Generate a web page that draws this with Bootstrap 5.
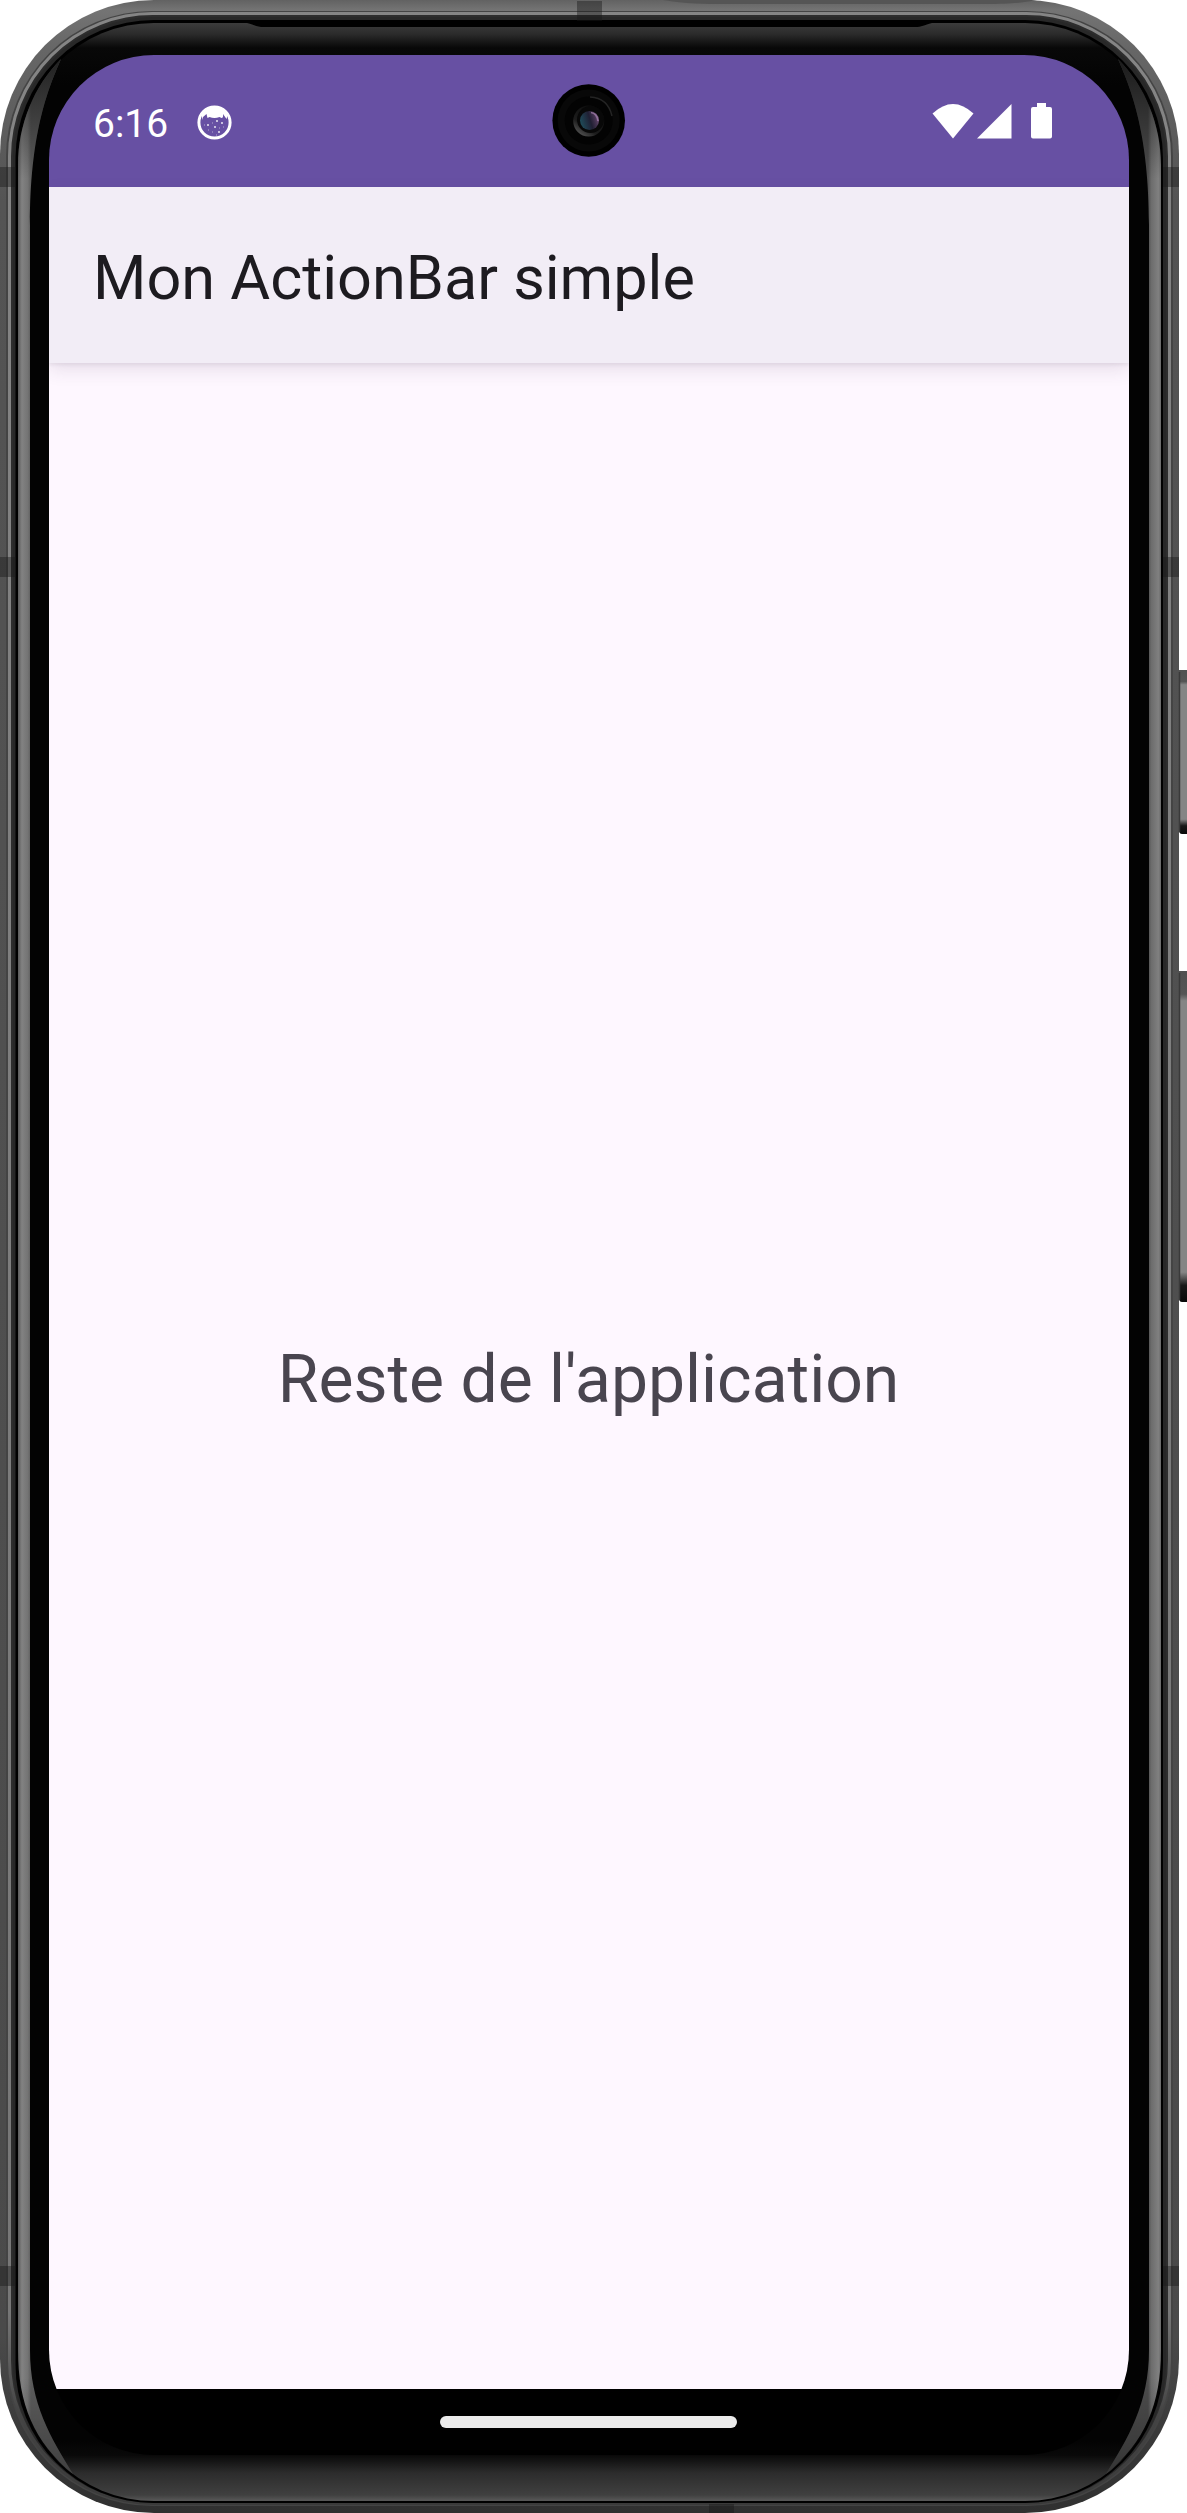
<!DOCTYPE html>
<html lang="fr">
<head>
<meta charset="utf-8">
<meta name="viewport" content="width=device-width, initial-scale=1">
<title>Mon ActionBar simple</title>
<link href="https://cdn.jsdelivr.net/npm/bootstrap@5.3.0/dist/css/bootstrap.min.css" rel="stylesheet">
<style>
body{font-family:Roboto,"Noto Sans",sans-serif;overflow:hidden}
.phone{width:1187px;height:2513px;padding:55px 58px 58px 49px}
.screen{border-radius:105px;z-index:1}
.status-bar{height:132px;background:#6750a3;color:#fff;padding:0 72px 0 44px}
.clock{font-size:39px;line-height:1;width:102px;padding-top:6px}
.notification{margin-top:2px}
.status-icons{margin-top:-1px}
.app-bar{height:176px;background:#f2edf6;padding:8px 44px 0 44px;box-shadow:0 2px 3px rgba(70,50,80,.08),0 7px 17px rgba(70,50,80,.12);z-index:1}
.app-title{font-size:61.200px;line-height:1;color:#1d1b20}
.app-body{background:#fef7ff;padding:7px 1px 0 0}
.app-text{font-size:66px;line-height:1;color:#49454f}
.nav-area{height:66px;background:#000;padding:27px 1px 0 0}
.home-pill{width:297px;height:12px;background:#ebebeb}
.camera{left:503px;top:29px}
</style>
<script src="https://cdn.jsdelivr.net/npm/bootstrap@5.3.0/dist/js/bootstrap.bundle.min.js"></script>
</head>
<body class="m-0 bg-white">
<div class="phone position-relative d-flex flex-column">
  <svg class="position-absolute top-0 start-0" width="1187" height="2513" viewBox="0 0 1187 2513" aria-hidden="true">
    <defs>
      <linearGradient id="metal" gradientUnits="userSpaceOnUse" x1="0" y1="0" x2="0" y2="2513">
        <stop offset="0" stop-color="#626262"/><stop offset=".004" stop-color="#747474"/><stop offset=".02" stop-color="#666"/><stop offset=".08" stop-color="#545454"/><stop offset=".93" stop-color="#4a4a4a"/><stop offset=".965" stop-color="#3b3b3b"/><stop offset="1" stop-color="#303030"/>
      </linearGradient>
      <linearGradient id="shine" gradientUnits="userSpaceOnUse" x1="0" y1="0" x2="0" y2="2513">
        <stop offset="0" stop-color="#858585"/><stop offset=".92" stop-color="#777"/><stop offset=".96" stop-color="#444"/><stop offset="1" stop-color="#393939"/>
      </linearGradient>
      <linearGradient id="glass" gradientUnits="userSpaceOnUse" x1="0" y1="23" x2="0" y2="2500">
        <stop offset="0" stop-color="#3c3c3c"/><stop offset=".0045" stop-color="#2b2b2b"/><stop offset=".01" stop-color="#080808"/><stop offset=".025" stop-color="#030303"/><stop offset=".976" stop-color="#030303"/><stop offset=".982" stop-color="#090909"/><stop offset=".989" stop-color="#2c2c2c"/><stop offset=".998" stop-color="#404040"/><stop offset="1" stop-color="#555"/>
      </linearGradient>
      <linearGradient id="glowLeft" gradientUnits="userSpaceOnUse" x1="18" x2="31" y1="0" y2="0">
        <stop offset="0" stop-color="#5a5a5a"/><stop offset=".3" stop-color="#828282"/><stop offset=".75" stop-color="#747474"/><stop offset="1" stop-color="#5c5c5c"/>
      </linearGradient>
      <linearGradient id="glowRight" gradientUnits="userSpaceOnUse" x1="1148" x2="1161" y1="0" y2="0">
        <stop offset="0" stop-color="#4c4c4c"/><stop offset=".25" stop-color="#6c6c6c"/><stop offset=".8" stop-color="#808080"/><stop offset="1" stop-color="#6a6a6a"/>
      </linearGradient>
      <linearGradient id="tips" gradientUnits="userSpaceOnUse" x1="0" y1="58" x2="0" y2="2474">
        <stop offset="0" stop-color="#000" stop-opacity=".65"/><stop offset=".05" stop-color="#000" stop-opacity="0"/><stop offset=".96" stop-color="#000" stop-opacity="0"/><stop offset="1" stop-color="#000" stop-opacity=".3"/>
      </linearGradient>
      <linearGradient id="key" x1="0" x2="0" y1="0" y2="1">
        <stop offset="0" stop-color="#505050"/><stop offset=".07" stop-color="#555"/><stop offset=".09" stop-color="#858585"/><stop offset=".91" stop-color="#858585"/><stop offset=".95" stop-color="#181818"/><stop offset="1" stop-color="#080808"/>
      </linearGradient>
    </defs>
    <!-- metal rim -->
    <rect x="0" y="0" width="1179" height="2513" rx="154" fill="url(#metal)"/>
    <path d="M663 0C685 4 705 4 725 4H985C1010 4 1020 3 1037 0Z" fill="#555"/>
    <rect x="6" y="11" width="1167" height="2495" rx="146" fill="#444"/>
    <rect x="9.5" y="13.5" width="1160" height="2490" rx="143" fill="#2d2d2d" stroke="url(#shine)" stroke-width="3"/>
    <rect x="13" y="17" width="1153" height="2486" rx="140" fill="#282828"/>
    <rect x="15.5" y="20" width="1147.500" height="2483" rx="138" fill="#000"/>
    <!-- antenna bands -->
    <g fill="#181818" fill-opacity=".42">
      <rect x="0" y="167" width="16" height="20"/><rect x="1163" y="167" width="16" height="20"/>
      <rect x="0" y="557" width="16" height="20"/><rect x="1163" y="557" width="16" height="20"/>
      <rect x="0" y="2266" width="16" height="20"/><rect x="1163" y="2266" width="16" height="20"/>
      <rect x="577" y="1" width="25" height="20"/><rect x="709" y="2504" width="25" height="9"/>
    </g>
    <!-- curved glass -->
    <rect x="18" y="23" width="1143" height="2478" rx="136" fill="url(#glass)"/>
    <path d="M247 23C255 25 257 27 264 27H915C922 27 924 25 932 23Z" fill="#000"/>
    <path d="M18 165C18 125 34 86 61 59C47 91 30 135 30 225V2350C30 2404 51 2438 73 2474C34 2442 18 2404 18 2350Z" fill="url(#glowLeft)"/>
    <path d="M18 165C18 125 34 86 61 59C47 91 30 135 30 225V2350C30 2404 51 2438 73 2474C34 2442 18 2404 18 2350Z" fill="url(#tips)"/>
    <path d="M1161 165C1161 125 1145 86 1118 59C1132 91 1149 135 1149 225V2350C1149 2404 1128 2438 1106 2474C1145 2442 1161 2404 1161 2350Z" fill="url(#glowRight)"/>
    <path d="M1161 165C1161 125 1145 86 1118 59C1132 91 1149 135 1149 225V2350C1149 2404 1128 2438 1106 2474C1145 2442 1161 2404 1161 2350Z" fill="url(#tips)"/>
    <!-- side keys -->
    <path d="M1179 670H1187V834H1182Q1179 834 1179 830Z" fill="url(#key)"/>
    <path d="M1179 971H1187V1302H1182Q1179 1302 1179 1298Z" fill="url(#key)"/>
    <path d="M1179.500 672V832M1179.500 973V1300" stroke="#3a3a3a" stroke-width="1.500"/>
  </svg>

  <main class="screen position-relative flex-grow-1 d-flex flex-column overflow-hidden">
    <header class="status-bar flex-shrink-0 d-flex align-items-center">
      <span class="clock">6:16</span>
      <svg class="notification" width="38" height="38" viewBox="0 0 38 38">
        <circle cx="19.500" cy="19.500" r="15.600" fill="none" stroke="#fff" stroke-width="3"/>
        <path d="M6 11Q11 3 19.500 3T33 11L31.500 16L28 11Q28.500 15 26.500 15L24.500 14Q19.500 16 14.500 14L12.500 15L11.500 11L8 14L8 17Z" fill="#fff"/>
        <path d="M12 22h2M21 18h2M26 20h2M19 24h2M23 29h2" stroke="#fff" stroke-width="1.500" opacity=".85"/>
        <path d="M9 22h1M17 20h1M13 27h1M24 25h1M17 29h1M28 24h1M21 32h1" stroke="#fff" stroke-width="1.200" opacity=".5"/>
      </svg>
      <svg class="status-icons ms-auto" width="126" height="44" viewBox="0 0 126 44" fill="#fff">
        <path d="M1.500 14.500Q22 -4.500 42.500 14.500L22 39.500Z"/>
        <path d="M46 39.500L80.500 5V39.500Z"/>
        <path d="M106 4h9v4h4q2 0 2 2v27.500q0 2-2 2h-17q-2 0-2-2V10q0-2 2-2h4Z"/>
      </svg>
      <svg class="camera position-absolute" width="74" height="74" viewBox="0 0 74 74">
        <defs>
          <linearGradient id="lens" x1="0" y1=".5" x2="1" y2=".2"><stop offset="0" stop-color="#1f4a58"/><stop offset=".5" stop-color="#201f33"/><stop offset=".78" stop-color="#4a3655"/><stop offset="1" stop-color="#93709a"/></linearGradient>
          <linearGradient id="ring" x1="0" y1="1" x2=".7" y2="0"><stop offset="0" stop-color="#6c6c6c"/><stop offset=".4" stop-color="#1c1c1c"/><stop offset="1" stop-color="#0b0b0b"/></linearGradient>
        </defs>
        <circle cx="36.700" cy="36.500" r="36.300" fill="#000"/>
        <circle cx="36.700" cy="36.500" r="31" fill="#080808"/>
        <circle cx="36.700" cy="36.500" r="24" fill="#030303"/>
        <path d="M38 13Q56 14 60 32" fill="none" stroke="#242424" stroke-width="1.500"/>
        <circle cx="36.700" cy="37" r="15.500" fill="url(#ring)"/>
        <circle cx="38.500" cy="35.500" r="13.500" fill="#080808"/>
        <circle cx="37.500" cy="36.500" r="9.500" fill="url(#lens)"/>
        <path d="M39 28.500Q45 29.500 46 37" fill="none" stroke="#a883b0" stroke-width="1.500" opacity=".7"/>
      </svg>
    </header>
    <div class="app-bar position-relative flex-shrink-0 d-flex align-items-center">
      <h1 class="app-title fw-normal m-0 text-nowrap">Mon ActionBar simple</h1>
    </div>
    <section class="app-body flex-grow-1 d-flex align-items-center justify-content-center">
      <p class="app-text m-0 text-nowrap">Reste de l'application</p>
    </section>
    <footer class="nav-area flex-shrink-0 d-flex justify-content-center">
      <div class="home-pill rounded-pill"></div>
    </footer>
  </main>
</div>
</body>
</html>
